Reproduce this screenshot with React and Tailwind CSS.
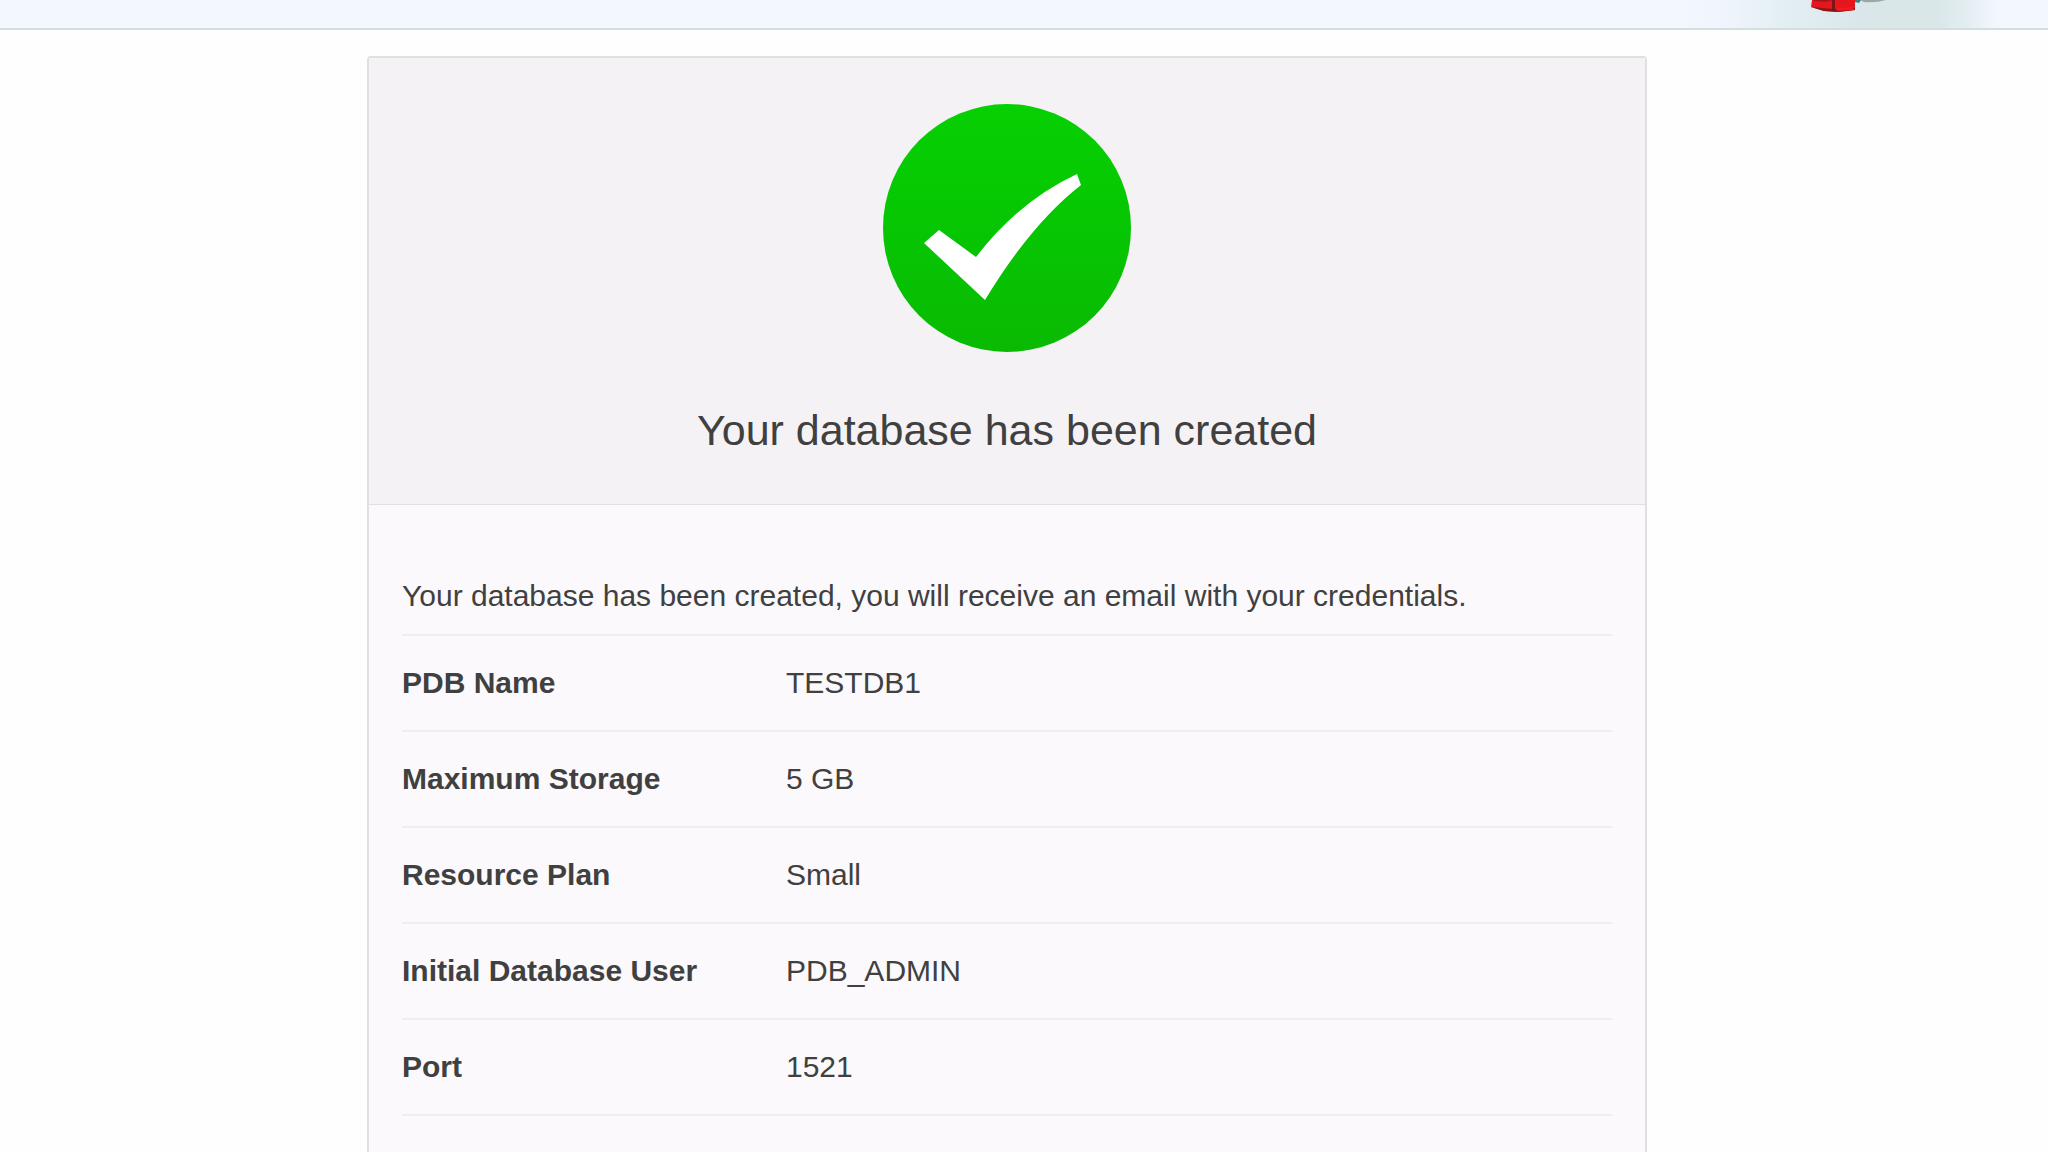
const details = [
    { label: "PDB Name", value: "TESTDB1" },
    { label: "Maximum Storage", value: "5 GB" },
    { label: "Resource Plan", value: "Small" },
    { label: "Initial Database User", value: "PDB_ADMIN" },
    { label: "Port", value: "1521" },
    { label: "Host", value: "lookup" },
];

function SuccessIcon() {
    return (
        <svg viewBox="0 0 248 248" className="size-[248px]" aria-hidden="true">
            <defs>
                <linearGradient id="successFill" x1="0" y1="0" x2="0" y2="1">
                    <stop offset="0" stopColor="#06d002" />
                    <stop offset="0.4" stopColor="#06c802" />
                    <stop offset="1" stopColor="#0aba02" />
                </linearGradient>
            </defs>
            <circle cx="124" cy="124" r="124" fill="url(#successFill)" />
            <path d="M41 139L56 126L93 153Q136 97 194 70L198 81Q148 120 102 196Z" fill="#fff" />
        </svg>
    );
}

function TopBanner() {
    return (
        <header className="flex h-[30px] justify-end overflow-hidden border-b-2 border-[#d2dfe0] bg-[#f3f8fe]">
            <svg viewBox="0 0 368 28" className="h-7 w-[368px]" aria-hidden="true">
                <defs>
                    <linearGradient id="bannerGlow" x1="0" y1="0" x2="1" y2="0">
                        <stop offset="0" stopColor="#f3f8fe" />
                        <stop offset="0.12" stopColor="#eff5fc" />
                        <stop offset="0.3" stopColor="#e2eef2" />
                        <stop offset="0.5" stopColor="#dae7ea" />
                        <stop offset="0.7" stopColor="#d9e7e9" />
                        <stop offset="0.78" stopColor="#e4eef2" />
                        <stop offset="0.86" stopColor="#f3f7fe" />
                    </linearGradient>
                </defs>
                <rect width="368" height="28" fill="url(#bannerGlow)" />
                <path d="M180 0H206Q196 3 184 2Z" fill="#9aa6a8" />
                <path d="M174 0H181L179 3L175 2Z" fill="#3f7f80" />
                <path d="M132 0H175V10L158 12L144 11L131 7Z" fill="#e4181c" />
                <path d="M131 7L153 9L175 8V10L158 12L144 11Z" fill="#8c1518" />
                <path d="M156 8L173 7L174 10L157 11Z" fill="#f21a1c" />
                <path d="M133 0H153L146 2L134 1Z" fill="#a3171a" />
                <path d="M152 0H155V11H152Z" fill="#7d1518" />
            </svg>
        </header>
    );
}

function App() {
    return (
        <div className="h-screen overflow-hidden bg-[#fefefe] font-['Liberation_Sans',Arial,sans-serif] text-[#404040]">
            <TopBanner />
            <main className="pt-[26px] pr-[34px]">
                <section className="mx-auto max-w-[1280px] rounded-sm border-2 border-[#e0dfe2] bg-[#fbf9fc]">
                    <div className="flex flex-col items-center border-b border-[#e0dfe2] bg-[#f4f2f5] pt-[46px] pb-12">
                        <SuccessIcon />
                        <h1 className="mt-[52px] text-[43px] leading-[52px]">Your database has been created</h1>
                    </div>
                    <div className="px-[33px] pt-[73px]">
                        <p className="pb-5 text-[30px] leading-9">
                            Your database has been created, you will receive an email with your credentials.
                        </p>
                        <table className="w-full table-fixed text-left text-[30px] leading-9">
                            <tbody>
                                {details.map((item) => (
                                    <tr key={item.label} className="h-24 border-t-2 border-[#eeedf0]">
                                        <th className="w-96 font-bold">{item.label}</th>
                                        <td>{item.value}</td>
                                    </tr>
                                ))}
                            </tbody>
                        </table>
                    </div>
                </section>
            </main>
        </div>
    );
}

export default App;
